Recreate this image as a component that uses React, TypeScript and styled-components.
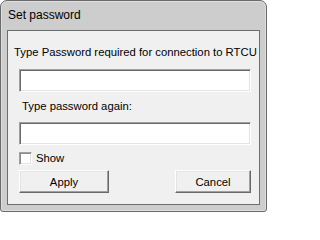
import React, { useState } from 'react';
import styled, { createGlobalStyle } from 'styled-components';

const GlobalStyle = createGlobalStyle`
    html, body {
        margin: 0;
        padding: 0;
        background: #ffffff;
    }
    body {
        font-family: "Liberation Sans", Arial, sans-serif;
        font-size: 11.3px;
        color: #000;
    }
`;

const Window = styled.div`
    width: 267px;
    height: 212px;
    box-sizing: border-box;
    border: 1px solid #6a6a6a;
    border-radius: 7px 7px 3px 3px;
    background: #cdcdcd;
    box-shadow: inset 0 0 0 1px #dedede;
    display: flex;
    flex-direction: column;
    padding: 0 6px 6px 6px;
    overflow: hidden;
`;

const TitleBar = styled.div`
    height: 29px;
    display: flex;
    align-items: center;
    padding: 0 0 2px 1px;
    box-sizing: border-box;
    font-size: 12px;
    color: #000;
`;

const Client = styled.div`
    flex: 1;
    border: 1px solid #6d6d6d;
    background: #f0f0f0;
    display: flex;
    flex-direction: column;
    padding: 15px 8px 0 11px;
`;

const Label = styled.div<{ $indent: number; $gap: number }>`
    line-height: 13px;
    height: 13px;
    margin-left: ${p => p.$indent}px;
    margin-top: ${p => p.$gap}px;
    white-space: nowrap;
`;

const TextBox = styled.input<{ $gap: number }>`
    box-sizing: border-box;
    width: 232px;
    height: 23px;
    margin: ${p => p.$gap}px 0 0 0;
    padding: 0 3px;
    background: #fff;
    border: 1px solid;
    border-color: #a0a0a0 #ffffff #ffffff #a0a0a0;
    box-shadow: inset 1px 1px 0 #696969, inset -1px -1px 0 #e3e3e3;
    font: inherit;
    outline: none;
`;

const CheckRow = styled.label`
    display: flex;
    align-items: center;
    gap: 4px;
    height: 13px;
    margin-top: 7px;
    line-height: 13px;
`;

const CheckBox = styled.span`
    width: 13px;
    height: 13px;
    box-sizing: border-box;
    background: #fff;
    border: 1px solid;
    border-color: #a0a0a0 #ffffff #ffffff #a0a0a0;
    box-shadow: inset 1px 1px 0 #8a8a8a, inset -1px -1px 0 #e3e3e3;
`;

const ButtonRow = styled.div`
    display: flex;
    justify-content: space-between;
    width: 232px;
    margin-top: 5px;
`;

const Button = styled.button<{ $width: number }>`
    box-sizing: border-box;
    width: ${p => p.$width}px;
    height: 23px;
    padding: 0;
    background: #f0f0f0;
    border: 1px solid;
    border-color: #ffffff #696969 #696969 #ffffff;
    box-shadow: inset -1px -1px 0 #a0a0a0, inset 1px 1px 0 #e3e3e3;
    font: inherit;
    color: #000;
`;

export default function App() {
    const [show, setShow] = useState(false);

    return (
        <>
            <GlobalStyle />
            <Window>
                <TitleBar>Set password</TitleBar>
                <Client>
                    <Label $indent={-5} $gap={0}>Type Password required for connection to RTCU</Label>
                    <TextBox $gap={10} type={show ? 'text' : 'password'} />
                    <Label $indent={3} $gap={8}>Type password again:</Label>
                    <TextBox $gap={9} type={show ? 'text' : 'password'} />
                    <CheckRow onClick={() => setShow(!show)}>
                        <CheckBox />
                        Show
                    </CheckRow>
                    <ButtonRow>
                        <Button $width={90}>Apply</Button>
                        <Button $width={76}>Cancel</Button>
                    </ButtonRow>
                </Client>
            </Window>
        </>
    );
}
